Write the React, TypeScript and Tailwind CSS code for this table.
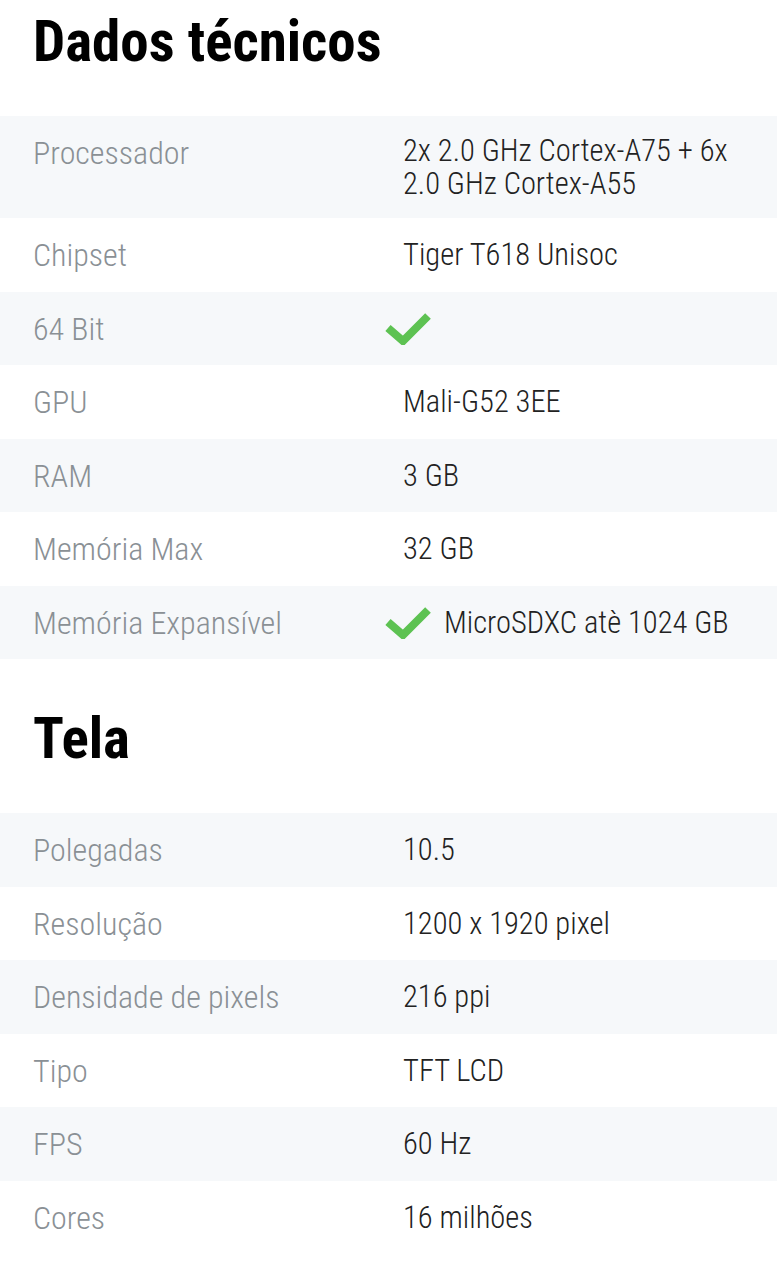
import React from 'react';

type Spec = {
  label: string;
  value?: string;
  check?: boolean;
};

const dadosTecnicos: Spec[] = [
  { label: 'Processador', value: '2x 2.0 GHz Cortex-A75 + 6x 2.0 GHz Cortex-A55' },
  { label: 'Chipset', value: 'Tiger T618 Unisoc' },
  { label: '64 Bit', check: true },
  { label: 'GPU', value: 'Mali-G52 3EE' },
  { label: 'RAM', value: '3 GB' },
  { label: 'Memória Max', value: '32 GB' },
  { label: 'Memória Expansível', value: 'MicroSDXC atè 1024 GB', check: true },
];

const tela: Spec[] = [
  { label: 'Polegadas', value: '10.5' },
  { label: 'Resolução', value: '1200 x 1920 pixel' },
  { label: 'Densidade de pixels', value: '216 ppi' },
  { label: 'Tipo', value: 'TFT LCD' },
  { label: 'FPS', value: '60 Hz' },
  { label: 'Cores', value: '16 milhões' },
];

function CheckIcon() {
  return (
    <svg className="w-[46px] h-[34px] shrink-0 -ml-[18px]" viewBox="0 0 46 34" fill="none">
      <polyline
        points="3,17 18,30 43,5"
        stroke="#5dc252"
        strokeWidth={8}
        strokeLinecap="butt"
        strokeLinejoin="miter"
      />
    </svg>
  );
}

function SpecRow({ spec, shaded }: { spec: Spec; shaded: boolean }) {
  return (
    <div
      className={`flex items-center min-h-[73.5px] py-[18px] pl-[33px] pr-[33px] ${
        shaded ? 'bg-[#f6f8fa]' : 'bg-white'
      }`}
    >
      <div className="w-[370px] shrink-0 self-start pt-[3px] text-[32px] leading-[33px] font-light [font-stretch:87.5%] text-[#8a9095]">
        {spec.label}
      </div>
      <div className="flex-1 flex items-center text-[30.5px] leading-[33px] font-[350] [font-stretch:87.5%] text-[#222]">
        {spec.check && <CheckIcon />}
        {spec.value && (
          <span className={spec.check ? 'ml-[13px]' : ''}>{spec.value}</span>
        )}
      </div>
    </div>
  );
}

function Section({ title, rows, first }: { title: string; rows: Spec[]; first?: boolean }) {
  return (
    <section>
      <h2
        className={`px-[33px] pb-[44px] text-[57px] leading-[60px] font-bold text-black [font-stretch:75%] ${
          first ? 'pt-[12px]' : 'pt-[50px]'
        }`}
      >
        {title}
      </h2>
      <div>
        {rows.map((row, i) => (
          <SpecRow key={row.label} spec={row} shaded={i % 2 === 0} />
        ))}
      </div>
    </section>
  );
}

export default function App() {
  return (
    <div className="w-[777px] min-h-[1280px] bg-white font-['Roboto','Liberation_Sans',sans-serif]">
      <Section title="Dados técnicos" rows={dadosTecnicos} first />
      <Section title="Tela" rows={tela} />
    </div>
  );
}
